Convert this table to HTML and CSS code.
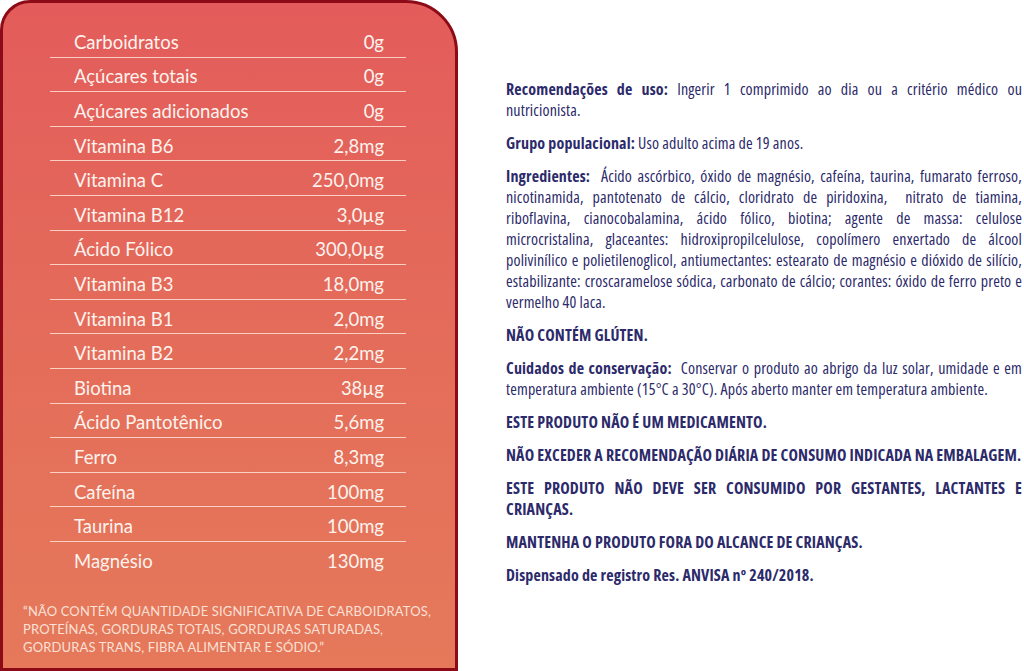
FILE: index.html
```html
<!DOCTYPE html>
<html lang="pt-BR">
<head>
<meta charset="utf-8">
<title>Informação nutricional</title>
<link rel="stylesheet" href="styles.css">
</head>
<body>
<div class="page">
  <section class="panel">
    <div class="table">
      <div class="row"><span>Carboidratos</span><span>0g</span></div>
      <div class="row"><span>Açúcares totais</span><span>0g</span></div>
      <div class="row"><span>Açúcares adicionados</span><span>0g</span></div>
      <div class="row"><span>Vitamina B6</span><span>2,8mg</span></div>
      <div class="row"><span>Vitamina C</span><span>250,0mg</span></div>
      <div class="row"><span>Vitamina B12</span><span>3,0µg</span></div>
      <div class="row"><span>Ácido Fólico</span><span>300,0µg</span></div>
      <div class="row"><span>Vitamina B3</span><span>18,0mg</span></div>
      <div class="row"><span>Vitamina B1</span><span>2,0mg</span></div>
      <div class="row"><span>Vitamina B2</span><span>2,2mg</span></div>
      <div class="row"><span>Biotina</span><span>38µg</span></div>
      <div class="row"><span>Ácido Pantotênico</span><span>5,6mg</span></div>
      <div class="row"><span>Ferro</span><span>8,3mg</span></div>
      <div class="row"><span>Cafeína</span><span>100mg</span></div>
      <div class="row"><span>Taurina</span><span>100mg</span></div>
      <div class="row last"><span>Magnésio</span><span>130mg</span></div>
    </div>
    <p class="note">“NÃO CONTÉM QUANTIDADE SIGNIFICATIVA DE CARBOIDRATOS,<br>PROTEÍNAS, GORDURAS TOTAIS, GORDURAS SATURADAS,<br>GORDURAS TRANS, FIBRA ALIMENTAR E SÓDIO.”</p>
  </section>
  <section class="info">
    <p><b>Recomendações de uso:</b> Ingerir 1 comprimido ao dia ou a critério médico ou nutricionista.</p>
    <p><b>Grupo populacional:</b> Uso adulto acima de 19 anos.</p>
    <p><b>Ingredientes:</b>&nbsp; Ácido ascórbico, óxido de magnésio, cafeína, taurina, fumarato ferroso, nicotinamida, pantotenato de cálcio, cloridrato de piridoxina,&nbsp; nitrato de tiamina, riboflavina, cianocobalamina, ácido fólico, biotina; agente de massa: celulose microcristalina, glaceantes: hidroxipropilcelulose, copolímero enxertado de álcool polivinílico e polietilenoglicol, antiumectantes: estearato de magnésio e dióxido de silício, estabilizante: croscaramelose sódica, carbonato de cálcio; corantes: óxido de ferro preto e vermelho 40 laca.</p>
    <p class="caps">NÃO CONTÉM GLÚTEN.</p>
    <p><b>Cuidados de conservação:</b>&nbsp; Conservar o produto ao abrigo da luz solar, umidade e em temperatura ambiente (15°C a 30°C). Após aberto manter em temperatura ambiente.</p>
    <p class="caps">ESTE PRODUTO NÃO É UM MEDICAMENTO.</p>
    <p class="caps">NÃO EXCEDER A RECOMENDAÇÃO DIÁRIA DE CONSUMO INDICADA NA EMBALAGEM.</p>
    <p class="caps">ESTE PRODUTO NÃO DEVE SER CONSUMIDO POR GESTANTES, LACTANTES E CRIANÇAS.</p>
    <p class="caps">MANTENHA O PRODUTO FORA DO ALCANCE DE CRIANÇAS.</p>
    <p class="caps">Dispensado de registro Res. ANVISA nº 240/2018.</p>
  </section>
</div>
</body>
</html>
```

FILE: styles.css
```css
html, body {
  margin: 0;
  padding: 0;
  background: #ffffff;
}

.page {
  display: flex;
  width: 1024px;
  height: 671px;
  overflow: hidden;
}

.panel {
  box-sizing: border-box;
  width: 458px;
  height: 671px;
  flex: none;
  border: 3px solid #8d0b17;
  border-radius: 30px 52px 0 0;
  background: linear-gradient(to bottom, #e35c5b 0%, #e46c5a 50%, #e5795a 100%);
  padding: 20px 49px 0 47px;
  display: flex;
  flex-direction: column;
  font-family: Lato, "Open Sans", sans-serif;
  color: #fdf3ee;
}

.table {
  display: flex;
  flex-direction: column;
}

.row {
  box-sizing: border-box;
  height: 34.6px;
  display: flex;
  justify-content: space-between;
  align-items: center;
  padding: 4px 22px 0 24px;
  font-size: 18.5px;
  border-bottom: 1.5px solid rgba(255, 232, 222, 0.8);
}

.row.last {
  border-bottom: none;
}

.note {
  margin: 25px -40px 0 -27px;
  font-size: 13px;
  line-height: 18px;
  color: #fae0d6;
  font-weight: 400;
  letter-spacing: 0.15px;
  white-space: nowrap;
}

.info {
  box-sizing: border-box;
  flex: 1;
  min-width: 0;
  padding: 79px 2px 0 48px;
  font-family: "Open Sans", sans-serif;
  font-stretch: 75%;
  font-size: 16px;
  letter-spacing: 0.15px;
  line-height: 21px;
  color: #2c2a6a;
}

.info p {
  margin: 0 0 12px 0;
  text-align: justify;
}

.info b,
.info .caps {
  font-weight: 700;
}
```
